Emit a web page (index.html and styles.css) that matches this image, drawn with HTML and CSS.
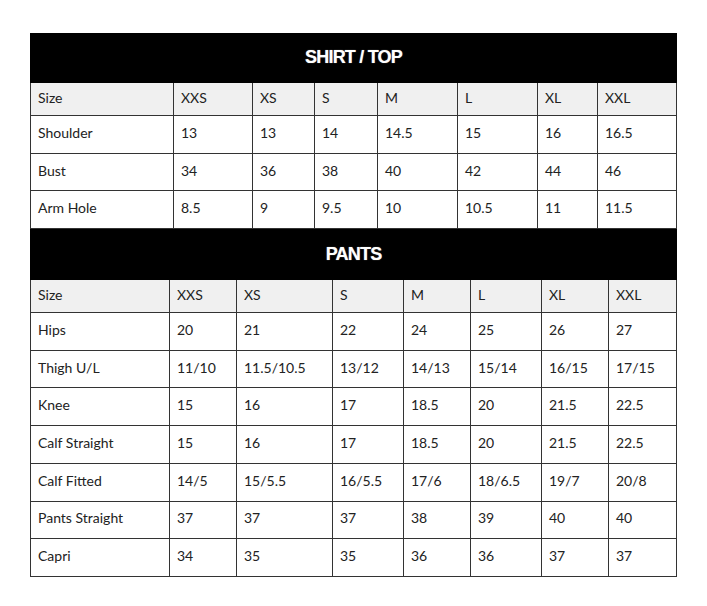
FILE: index.html
```html
<!DOCTYPE html>
<html>
<head>
<meta charset="utf-8">
<link rel="stylesheet" href="styles.css">
</head>
<body>
<div class="chart">
  <table class="size-table shirt">
    <colgroup>
      <col class="c-label"><col class="c1"><col class="c2"><col class="c3"><col class="c4"><col class="c5"><col class="c6"><col class="c7">
    </colgroup>
    <thead>
      <tr class="title-row"><th colspan="8">SHIRT / TOP</th></tr>
      <tr class="size-row"><td>Size</td><td>XXS</td><td>XS</td><td>S</td><td>M</td><td>L</td><td>XL</td><td>XXL</td></tr>
    </thead>
    <tbody>
      <tr><td>Shoulder</td><td>13</td><td>13</td><td>14</td><td>14.5</td><td>15</td><td>16</td><td>16.5</td></tr>
      <tr><td>Bust</td><td>34</td><td>36</td><td>38</td><td>40</td><td>42</td><td>44</td><td>46</td></tr>
      <tr><td>Arm Hole</td><td>8.5</td><td>9</td><td>9.5</td><td>10</td><td>10.5</td><td>11</td><td>11.5</td></tr>
    </tbody>
  </table>
  <table class="size-table pants">
    <colgroup>
      <col class="c-label"><col class="c1"><col class="c2"><col class="c3"><col class="c4"><col class="c5"><col class="c6"><col class="c7">
    </colgroup>
    <thead>
      <tr class="title-row"><th colspan="8">PANTS</th></tr>
      <tr class="size-row"><td>Size</td><td>XXS</td><td>XS</td><td>S</td><td>M</td><td>L</td><td>XL</td><td>XXL</td></tr>
    </thead>
    <tbody>
      <tr><td>Hips</td><td>20</td><td>21</td><td>22</td><td>24</td><td>25</td><td>26</td><td>27</td></tr>
      <tr><td>Thigh U/L</td><td>11/10</td><td>11.5/10.5</td><td>13/12</td><td>14/13</td><td>15/14</td><td>16/15</td><td>17/15</td></tr>
      <tr><td>Knee</td><td>15</td><td>16</td><td>17</td><td>18.5</td><td>20</td><td>21.5</td><td>22.5</td></tr>
      <tr><td>Calf Straight</td><td>15</td><td>16</td><td>17</td><td>18.5</td><td>20</td><td>21.5</td><td>22.5</td></tr>
      <tr><td>Calf Fitted</td><td>14/5</td><td>15/5.5</td><td>16/5.5</td><td>17/6</td><td>18/6.5</td><td>19/7</td><td>20/8</td></tr>
      <tr><td>Pants Straight</td><td>37</td><td>37</td><td>37</td><td>38</td><td>39</td><td>40</td><td>40</td></tr>
      <tr><td>Capri</td><td>34</td><td>35</td><td>35</td><td>36</td><td>36</td><td>37</td><td>37</td></tr>
    </tbody>
  </table>
</div>
</body>
</html>
```
FILE: styles.css
```css
html, body {
  margin: 0;
  padding: 0;
  background: #ffffff;
}

body {
  font-family: Lato, "Open Sans", "Liberation Sans", sans-serif;
  color: #222222;
}

.chart {
  padding: 33px 30px 0 30px;
  display: flex;
  flex-direction: column;
}

.size-table {
  width: 646px;
  border-collapse: collapse;
  table-layout: fixed;
  font-size: 14px;
}

.size-table td,
.size-table th {
  border: 1px solid #333333;
  padding: 0 0 4px 7px;
  text-align: left;
  vertical-align: middle;
  white-space: nowrap;
}

.title-row th {
  background: #000000;
  border-color: #000000;
  color: #ffffff;
  font-family: "Liberation Sans", Arial, sans-serif;
  font-weight: bold;
  font-size: 18px;
  letter-spacing: -0.8px;
  text-align: center;
  padding: 0 0 1px 0;
  height: 47px;
  text-shadow: 0 0 1px rgba(255, 255, 255, 0.6);
}

.pants .title-row th {
  height: 48px;
}

.size-row td {
  background: #f0f0f0;
  height: 28px;
}

tbody td {
  height: 32.7px;
}

.shirt .c-label { width: 143px; }
.shirt .c1 { width: 79px; }
.shirt .c2 { width: 62px; }
.shirt .c3 { width: 63px; }
.shirt .c4 { width: 80px; }
.shirt .c5 { width: 80px; }
.shirt .c6 { width: 60px; }
.shirt .c7 { width: 79px; }

.pants .c-label { width: 139px; }
.pants .c1 { width: 67px; }
.pants .c2 { width: 96px; }
.pants .c3 { width: 71px; }
.pants .c4 { width: 67px; }
.pants .c5 { width: 71px; }
.pants .c6 { width: 67px; }
.pants .c7 { width: 68px; }
```
